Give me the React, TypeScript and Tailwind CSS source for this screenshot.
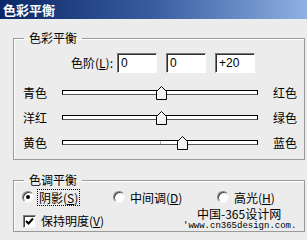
import {FC} from 'react';

const Thumb: FC<{left: string}> = ({left}) => (
    <svg className={`absolute top-[-5px] ${left}`} width="11" height="14" viewBox="0 0 11 14">
        <polygon points="5.5,0.5 10.5,5.5 10.5,13.5 0.5,13.5 0.5,5.5" fill="#f2f2f2" stroke="#000" />
        <polyline points="1.5,12.5 1.5,6 5.5,2" fill="none" stroke="#fff" />
    </svg>
);

const SliderRow: FC<{left: string; right: string; thumb: string; tick?: boolean}> = ({left, right, thumb, tick}) => (
    <div className="flex items-center h-[25px] pl-[9px]">
        <span className="w-[39px]">{left}</span>
        <div className="relative w-[196px] h-[5px] border border-black border-b-[#5a5a5a] bg-white">
            {tick && <div className="absolute left-[97px] top-0 w-[1px] h-full bg-[#b0b0b0]" />}
            <Thumb left={thumb} />
        </div>
        <span className="ml-[15px]">{right}</span>
    </div>
);

const Radio: FC<{checked?: boolean}> = ({checked}) => (
    <span className="flex items-center justify-center w-[12px] h-[12px] rounded-full bg-white border border-t-[#808080] border-l-[#808080] border-b-[#f4f4f4] border-r-[#f4f4f4] shadow-[inset_1px_1px_0_#404040]">
        {checked && <span className="w-[4px] h-[4px] rounded-full bg-black" />}
    </span>
);

const Field: FC<{value: string}> = ({value}) => (
    <div className="w-[40px] h-[20px] bg-white border border-t-[#7a7a7a] border-l-[#7a7a7a] border-b-white border-r-white shadow-[inset_1px_1px_0_#2e2e2e] pl-[3px] leading-[18px] text-[12px] font-['Liberation_Sans',sans-serif]">
        {value}
    </div>
);

export default function App() {
    return (
        <div className="relative w-[307px] h-[240px] overflow-hidden bg-[#ececec] text-[12px] text-black font-['Noto_Sans_CJK_SC',sans-serif]">
            {/* title bar */}
            <div className="h-[19px] pl-[3px] leading-[19px] text-[13px] font-bold text-white bg-gradient-to-r from-[#0b2767] via-[#3a5da0] to-[#8fb0e2]">
                色彩平衡
            </div>

            {/* color balance group */}
            <fieldset className="ml-[13px] mt-[11px] w-[292px] border border-[#9a9a9a] shadow-[inset_1px_1px_0_#fff] pb-[4px]">
                <legend className="ml-[10px] px-[5px] leading-[16px]">色彩平衡</legend>
                <div className="flex items-center mt-[7px] h-[20px]">
                    <span className="w-[99px] text-right">色阶(<u>L</u>):</span>
                    <div className="flex gap-[9px] ml-[4px]">
                        <Field value="0" />
                        <Field value="0" />
                        <Field value="+20" />
                    </div>
                </div>
                <div className="mt-[7px]">
                    <SliderRow left="青色" right="红色" thumb="left-[93px]" />
                    <SliderRow left="洋红" right="绿色" thumb="left-[93px]" />
                    <SliderRow left="黄色" right="蓝色" thumb="left-[114px]" tick />
                </div>
            </fieldset>

            {/* tone balance group */}
            <fieldset className="ml-[13px] mt-[12px] w-[292px] border border-[#9a9a9a] shadow-[inset_1px_1px_0_#fff] pb-[1px]">
                <legend className="ml-[10px] px-[5px] leading-[16px]">色调平衡</legend>
                <div className="flex items-center h-[18px] pl-[8px]">
                    <label className="flex items-center w-[91px]">
                        <Radio checked />
                        <span className="ml-[3px] px-[1px] border border-dotted border-black leading-[15px]">阴影(<u>S</u>)</span>
                    </label>
                    <label className="flex items-center w-[104px] leading-[15px]">
                        <Radio />
                        <span className="ml-[5px]">中间调(<u>D</u>)</span>
                    </label>
                    <label className="flex items-center leading-[15px]">
                        <Radio />
                        <span className="ml-[5px]">高光(<u>H</u>)</span>
                    </label>
                </div>
                <div className="flex items-center h-[18px] mt-[6px] pl-[9px]">
                    <span className="flex items-center justify-center w-[13px] h-[13px] bg-white border border-t-[#808080] border-l-[#808080] border-b-[#f4f4f4] border-r-[#f4f4f4] shadow-[inset_1px_1px_0_#404040]">
                        <svg width="9" height="9" viewBox="0 0 9 9">
                            <polyline points="1,4 3.5,6.5 8,1.5" fill="none" stroke="#000" strokeWidth="2" />
                        </svg>
                    </span>
                    <span className="ml-[5px]">保持明度(<u>V</u>)</span>
                </div>
            </fieldset>

            {/* watermark */}
            <div className="absolute left-[197px] top-[205px] leading-[17px]">中国-365设计网</div>
            <div className="absolute left-[183px] top-[221px] leading-[10px] text-[9px] font-['Liberation_Mono',monospace]">'www.cn365design.com.</div>
        </div>
    );
}
